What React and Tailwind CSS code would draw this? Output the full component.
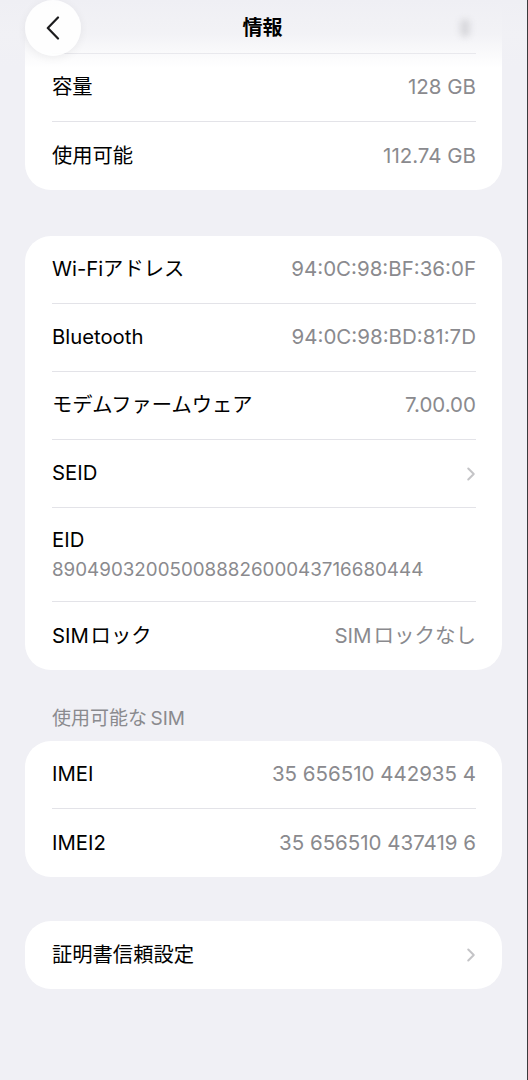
import { ChevronRight } from 'lucide-react'

const font = { fontFamily: 'Inter, "Noto Sans CJK JP", sans-serif' }

function Row({ label, value, chevron, last }) {
  return (
    <div className="pl-[27px] pr-[26px]">
      <div className={`flex h-[68px] items-center justify-between ${last ? '' : 'border-b border-[#e3e3e8]'}`}>
        <span className="text-[20.3px] text-black">{label}</span>
        {value && <span className="text-[20.5px] text-[#8a8a8e]">{value}</span>}
        {chevron && <ChevronRight className="-mr-[6px] h-[22px] w-[22px] text-[#c4c4c7]" strokeWidth={2.2} />}
      </div>
    </div>
  )
}

function Card({ children, className = '' }) {
  return <div className={`mx-[25px] rounded-[26px] bg-white ${className}`}>{children}</div>
}

export default function App() {
  return (
    <div style={font} className="relative h-[1080px] w-[528px] overflow-hidden border-r border-[#3a3a3c] bg-[#f0f0f5]">
      {/* header overlay */}
      <div className="absolute inset-x-0 top-0 z-10 h-[68px] bg-gradient-to-b from-[#efeff4] via-[#f1f1f5]/90 to-transparent">
        <div className="grid h-[56px] grid-cols-[1fr_auto_1fr] items-center px-[25px]">
          <button className="flex h-[56px] w-[56px] items-center justify-center rounded-full bg-white/90 shadow-[0_2px_10px_rgba(0,0,0,0.06)]">
            <svg width="14" height="24" viewBox="0 0 14 24" fill="none">
              <path d="M12 1.5L1.8 12L12 22.5" stroke="#1c1c1e" strokeWidth="2.2" strokeLinecap="round" strokeLinejoin="round" />
            </svg>
          </button>
          <span className="-ml-[2px] text-[20px] font-bold text-black">情報</span>
          <div className="mr-[32px] h-[18px] w-[10px] justify-self-end rounded-full bg-[#d8d8dc] blur-[3px]" />
        </div>
      </div>

      <Card className="-mt-[14px]">
        <Row label="" />
        <Row label="容量" value="128 GB" />
        <Row label="使用可能" value="112.74 GB" last />
      </Card>

      <Card className="mt-[46px]">
        <Row label="Wi-Fiアドレス" value="94:0C:98:BF:36:0F" />
        <Row label="Bluetooth" value="94:0C:98:BD:81:7D" />
        <Row label="モデムファームウェア" value="7.00.00" />
        <Row label="SEID" chevron />
        <div className="pl-[27px] pr-[26px]">
          <div className="flex h-[94px] flex-col justify-center border-b border-[#e3e3e8]">
            <span className="text-[20.3px] leading-[30px] text-black">EID</span>
            <span className="text-[18.8px] leading-[30px] text-[#8a8a8e]">89049032005008882600043716680444</span>
          </div>
        </div>
        <Row label={'SIM\u200aロック'} value={'SIM\u200aロックなし'} last />
      </Card>

      <div className="px-[52px] pb-[8px] pt-[35px] text-[19px] leading-[28px] text-[#8a8a8e]">{'使用可能な\u2009SIM'}</div>

      <Card>
        <Row label="IMEI" value="35 656510 442935 4" />
        <Row label="IMEI2" value="35 656510 437419 6" last />
      </Card>

      <Card className="mt-[44px]">
        <Row label="証明書信頼設定" chevron last />
      </Card>
    </div>
  )
}
